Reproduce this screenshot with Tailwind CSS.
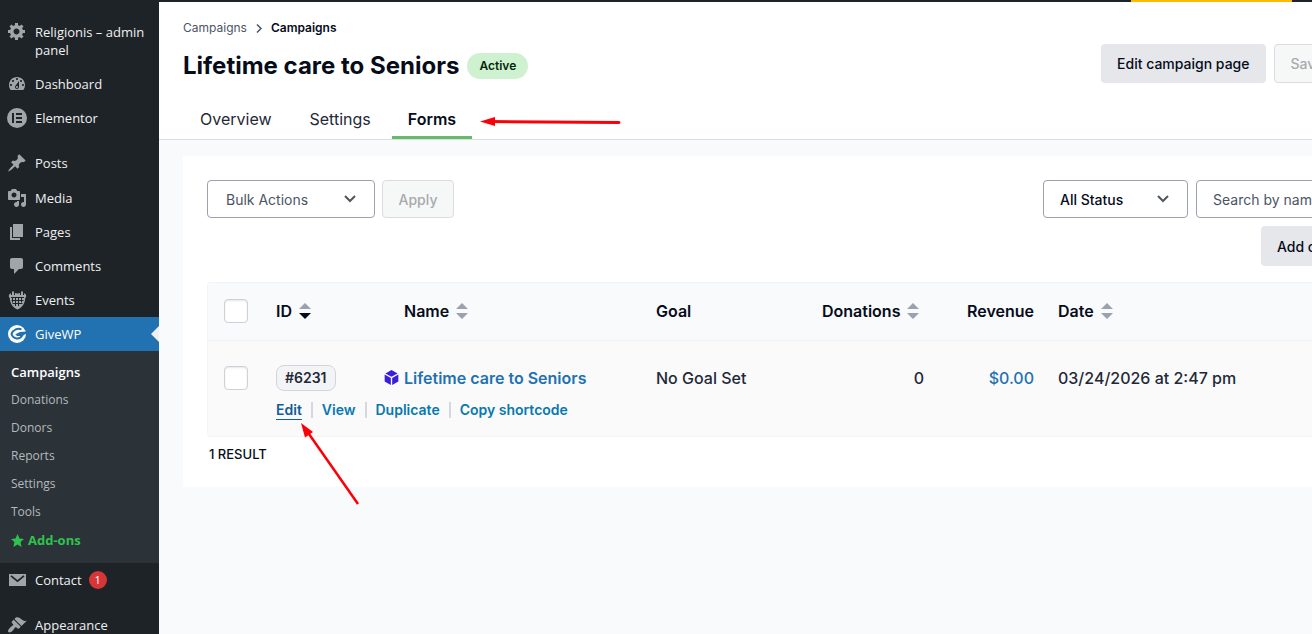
<!DOCTYPE html>
<html lang="en">
<head>
<meta charset="utf-8">
<title>Lifetime care to Seniors – Forms</title>
<meta name="viewport" content="width=device-width, initial-scale=1">
<script src="https://cdn.jsdelivr.net/npm/@tailwindcss/browser@4"></script>
</head>
<body class="flex h-screen overflow-hidden bg-[#f9fafc] font-[Inter,sans-serif] text-[#060c1a]">

<nav aria-label="Admin menu" class="w-[159px] shrink-0 overflow-hidden bg-[#1d2327] pt-[15px] font-['Open_Sans','Noto_Sans',sans-serif] text-[13px] leading-[18px] text-[#f0f0f1]">
  <a href="#" class="flex gap-2 py-2 pl-[7px]">
    <svg class="-mt-[2px] size-5 shrink-0 fill-[#a0a5aa]" viewBox="0 0 20 20"><path d="M18 12h-2.18c-.17.7-.44 1.35-.81 1.93l1.54 1.54-2.1 2.1-1.54-1.54c-.58.36-1.23.63-1.91.79V19H8v-2.18c-.68-.16-1.33-.43-1.91-.79l-1.54 1.54-2.12-2.12 1.54-1.54c-.36-.58-.63-1.23-.79-1.91H1V9.03h2.17c.16-.7.44-1.35.8-1.94L2.43 5.55l2.1-2.1 1.54 1.54c.58-.37 1.24-.64 1.93-.81V2h3v2.18c.68.16 1.33.43 1.91.79l1.54-1.54 2.12 2.12-1.54 1.54c.36.59.64 1.24.8 1.94H18V12zm-8.5 1.5c1.66 0 3-1.34 3-3s-1.34-3-3-3-3 1.34-3 3 1.34 3 3 3z"/></svg>
    <span>Religionis – admin<br>panel</span>
  </a>
  <a href="#" class="flex h-[34px] items-center gap-2 pl-[7px]">
    <svg class="size-5 shrink-0 fill-[#a0a5aa]" viewBox="0 0 20 20"><path d="M3.76 16h12.48c1.1-1.37 1.76-3.11 1.76-5 0-4.42-3.58-8-8-8s-8 3.58-8 8c0 1.89.66 3.63 1.76 5zM10 4c.55 0 1 .45 1 1s-.45 1-1 1-1-.45-1-1 .45-1 1-1zM6 6c.55 0 1 .45 1 1s-.45 1-1 1-1-.45-1-1 .45-1 1-1zm8 0c.55 0 1 .45 1 1s-.45 1-1 1-1-.45-1-1 .45-1 1-1zm-5.37 5.55L12 7v6c0 1.1-.9 2-2 2s-2-.9-2-2c0-.57.24-1.08.63-1.45zM4 10c.55 0 1 .45 1 1s-.45 1-1 1-1-.45-1-1 .45-1 1-1zm12 0c.55 0 1 .45 1 1s-.45 1-1 1-1-.45-1-1 .45-1 1-1zm-5 3c0-.55-.45-1-1-1s-1 .45-1 1 .45 1 1 1 1-.45 1-1z"/></svg>
    <span>Dashboard</span>
  </a>
  <a href="#" class="flex h-[34px] items-center gap-2 pl-[7px]">
    <svg class="size-5 shrink-0" viewBox="0 0 20 20"><circle cx="10" cy="10" r="10" fill="#a0a5aa"/><path fill="#1d2327" d="M5 5h2v10H5zM9 5h6v2H9zM9 9h6v2H9zM9 13h6v2H9z"/></svg>
    <span>Elementor</span>
  </a>
  <a href="#" class="mt-[11px] flex h-[34px] items-center gap-2 pl-[7px]">
    <svg class="size-5 shrink-0 fill-[#a0a5aa]" viewBox="0 0 20 20"><path d="M10.44 3.02l1.82-1.82 6.36 6.35-1.83 1.82c-1.05-.68-2.48-.57-3.41.36l-.75.75c-.92.93-1.04 2.35-.35 3.41l-1.83 1.82-2.41-2.41-2.8 2.79c-.42.42-3.38 2.71-3.8 2.29s1.86-3.39 2.28-3.81l2.79-2.79L4.1 9.36l1.83-1.82c1.05.69 2.48.57 3.4-.36l.75-.75c.93-.92 1.05-2.35.36-3.41z"/></svg>
    <span>Posts</span>
  </a>
  <a href="#" class="mt-px flex h-[34px] items-center gap-2 pl-[7px]">
    <svg class="size-5 shrink-0 fill-[#a0a5aa]" viewBox="0 0 20 20"><path d="M13 11V4c0-.55-.45-1-1-1h-1.67L9 1H5L3.67 3H2c-.55 0-1 .45-1 1v7c0 .55.45 1 1 1h10c.55 0 1-.45 1-1zM7 4.5c1.38 0 2.5 1.12 2.5 2.5S8.38 9.5 7 9.5 4.5 8.38 4.5 7 5.62 4.5 7 4.5zM14 6h5v10.5c0 1.38-1.12 2.5-2.5 2.5S14 17.88 14 16.5s1.12-2.5 2.5-2.5c.17 0 .34.02.5.05V9h-3V6zm-4 8.05V13h2v3.5c0 1.38-1.12 2.5-2.5 2.5S7 17.88 7 16.5 8.12 14 9.5 14c.17 0 .34.02.5.05z"/></svg>
    <span>Media</span>
  </a>
  <a href="#" class="flex h-[34px] items-center gap-2 pl-[7px]">
    <svg class="size-5 shrink-0 fill-[#a0a5aa]" viewBox="0 0 20 20"><path d="M6 15V2h10v13H6zm-1 1h8v2H3V5h2v11z"/></svg>
    <span>Pages</span>
  </a>
  <a href="#" class="flex h-[34px] items-center gap-2 pl-[7px]">
    <svg class="size-5 shrink-0 fill-[#a0a5aa]" viewBox="0 0 20 20"><path d="M5 2h9c1.1 0 2 .9 2 2v7c0 1.1-.9 2-2 2h-2l-5 5v-5H5c-1.1 0-2-.9-2-2V4c0-1.1.9-2 2-2z"/></svg>
    <span>Comments</span>
  </a>
  <a href="#" class="flex h-[34px] items-center gap-2 pl-[7px]">
    <svg class="size-5 shrink-0" viewBox="0 0 20 20"><path fill="#a0a5aa" d="M5 1.500h2V3c2 0 3 .2 3.500.8.5-.6 1.500-.8 3.500-.8V1.500h2V3c2.200.3 3.200 1.500 3.200 3.200 0 .8-.7 1.300-1 2C18 13.500 15 17.500 10.500 19.500 6 17.500 3 13.500 2.800 8.200c-.3-.7-1-1.200-1-2C1.800 4.500 2.800 3.300 5 3z"/><path fill="none" stroke="#1d2327" d="M4 7.500h13M5.500 7.500v5M8.500 7.500V16M11.500 7.500V16M14.500 7.500v5M4.500 10.500h12M5.500 13.500h10M4.500 3v2M7.500 3v2M13.500 3v2M16.500 3v2"/></svg>
    <span>Events</span>
  </a>
  <a href="#" aria-current="true" class="relative flex h-[34px] items-center gap-2 bg-[#2271b1] pl-[7px] text-white">
    <svg class="size-5 shrink-0" viewBox="0 0 20 20"><circle cx="10" cy="10" r="9" fill="#fff"/><path fill="none" stroke="#2271b1" stroke-width="2" d="M14.500 5.500C11 3.500 6 5.500 4.500 10c1.500 5 8 6.500 11 1H9.500"/><path fill="#2271b1" d="M8 10.500 13 8l6-.5v2.500l-5 2z"/></svg>
    <span>GiveWP</span>
    <svg class="absolute top-[9px] right-0 h-4 w-2 fill-[#f0f0f1]" viewBox="0 0 8 16"><path d="M8 0v16L0 8z"/></svg>
  </a>
  <div class="flex flex-col bg-[#2c3338] pt-[7px] pb-[9px] text-xs leading-[18px] text-[#b4b9be]">
    <a href="#" class="py-[5px] pl-[11px] text-[13px] leading-[18px] font-semibold text-white">Campaigns</a>
    <a href="#" class="py-[5px] pl-[11px]">Donations</a>
    <a href="#" class="py-[5px] pl-[11px]">Donors</a>
    <a href="#" class="py-[5px] pl-[11px]">Reports</a>
    <a href="#" class="py-[5px] pl-[11px]">Settings</a>
    <a href="#" class="py-[5px] pl-[11px]">Tools</a>
    <a href="#" class="flex items-center gap-1 py-[5px] pl-[11px] text-[13px] leading-[18px] font-bold text-[#2fc24f]">
      <svg class="size-[13px] fill-[#2fc24f]" viewBox="0 0 20 20"><path d="m10 0 3 6.800 7 .7-5.300 4.900L16.300 20 10 16l-6.300 4 1.600-7.600L0 7.500l7-.7z"/></svg>
      <span>Add-ons</span>
    </a>
  </div>
  <a href="#" class="flex h-[34px] items-center gap-2 pl-[7px]">
    <svg class="size-5 shrink-0" viewBox="0 0 20 20"><rect x="2" y="4" width="17" height="12" fill="#a0a5aa"/><path fill="none" stroke="#1d2327" stroke-width="1.700" d="m4 5.800 6.500 5.400L17 5.800"/></svg>
    <span>Contact</span>
    <span class="-ml-px flex size-[18px] items-center justify-center rounded-full bg-[#d63638] text-[11px] text-white">1</span>
  </a>
  <a href="#" class="mt-[11px] flex h-[34px] items-center gap-2 pl-[7px]">
    <svg class="size-5 shrink-0 fill-[#a0a5aa]" viewBox="0 0 20 20"><path d="M14.480 11.060L7.410 3.990l1.500-1.500c.5-.56 2.300-.47 3.510.32 1.210.8 1.430 1.280 2.910 2.100 1.180.64 2.450 1.260 4.450.85zm-.71.71L6.700 4.700 4.930 6.470c-.39.390-.39 1.020 0 1.410l1.060 1.060c.39.390.39 1.030 0 1.420-.6.600-1.430 1.110-2.210 1.690-.35.260-.7.530-1.010.84C1.430 14.230.4 16.080 1.400 17.070c.99 1 2.840-.03 4.180-1.360.31-.31.580-.66.850-1.020.57-.78 1.080-1.610 1.690-2.210.39-.39 1.020-.39 1.410 0l1.060 1.060c.39.390 1.020.39 1.410 0z"/></svg>
    <span>Appearance</span>
  </a>
</nav>

<div class="relative flex-1 overflow-hidden">
  <div class="flex h-[2px] justify-end bg-[#1d2327] pr-5"><span class="w-[161px] bg-[#ffba00]"></span></div>

  <div class="min-w-[1275px]">
    <header class="border-b border-[#dcdee3] bg-white px-6 pt-4">
      <nav aria-label="Breadcrumb" class="flex items-center gap-2 text-xs leading-5">
        <a href="#" class="text-[#4b5563]">Campaigns</a>
        <svg class="h-[9px] w-2 fill-none stroke-[#4b5563]" viewBox="0 0 8 9" stroke-width="1.500"><path d="m2 0.500 4 4-4 4"/></svg>
        <span class="font-semibold">Campaigns</span>
      </nav>
      <div class="mt-1 flex justify-between">
        <div class="mt-1 flex h-10 items-center gap-2">
          <h1 class="text-2xl font-bold">Lifetime care to Seniors</h1>
          <span class="rounded-full bg-[#cef2cf] px-3 py-1 text-xs leading-[18px] font-semibold text-[#06260d]">Active</span>
        </div>
        <div class="mt-[2px] flex h-[39px] gap-2 text-sm font-medium">
          <button type="button" class="rounded-[4px] bg-[#e5e7eb] px-4">Edit campaign page</button>
          <button type="button" disabled class="rounded-[4px] border border-[#dcdcde] bg-[#f6f7f7] px-4 text-[#a7aaad]">Save campaign</button>
        </div>
      </div>
      <div role="tablist" class="mt-[15px] flex text-base">
        <button role="tab" type="button" class="h-[38px] border-b-[3px] border-transparent px-[17px] text-[#1f2937]">Overview</button>
        <button role="tab" type="button" class="ml-1 h-[38px] border-b-[3px] border-transparent px-[17px] text-[#1f2937]">Settings</button>
        <button role="tab" type="button" aria-selected="true" class="ml-1 h-[38px] border-b-[3px] border-[#66bb6a] px-4 font-semibold">Forms</button>
      </div>
    </header>

    <main class="mx-6 mt-4 bg-white p-6 pb-[23px]">
      <div class="flex justify-between text-sm">
        <div class="flex h-[38px] gap-[7px]">
          <div class="relative">
            <select aria-label="Bulk actions" class="h-full w-[168px] appearance-none rounded-[4px] border border-[#9ca0af] bg-white pt-[2px] pl-[18px] text-[#4b5563]"><option>Bulk Actions</option></select>
            <svg class="pointer-events-none absolute top-[15px] right-[19px] h-2 w-3 fill-none stroke-[#50575e]" stroke-width="2" viewBox="0 0 12 8"><path d="m1 1 5 5 5-5"/></svg>
          </div>
          <button type="button" disabled class="w-[72px] rounded-[4px] border border-[#dcdcde] bg-[#f6f7f7] pt-[2px] font-medium text-[#a7aaad]">Apply</button>
        </div>
        <div class="flex flex-col items-end gap-2">
          <div class="flex h-[38px] gap-2">
            <div class="relative">
              <select aria-label="Status" class="h-full w-[145px] appearance-none rounded-[4px] border border-[#9ca0af] bg-white pt-[2px] pl-4 font-medium"><option>All Status</option></select>
              <svg class="pointer-events-none absolute top-[15px] right-[19px] h-2 w-3 fill-none stroke-[#50575e]" stroke-width="2" viewBox="0 0 12 8"><path d="m1 1 5 5 5-5"/></svg>
            </div>
            <input type="search" aria-label="Search forms" placeholder="Search by name or ID" class="w-[190px] rounded-[4px] border border-[#9ca0af] bg-white px-4 pt-[2px] placeholder:text-[#4b5563]">
          </div>
          <button type="button" class="h-10 w-[125px] rounded-[4px] bg-[#e5e7eb] px-4 pt-[2px] font-medium whitespace-nowrap">Add campaign</button>
        </div>
      </div>

      <div class="mt-4 overflow-hidden rounded-[4px] border border-[#f3f4f6]">
        <table class="w-full table-fixed text-left text-base">
          <colgroup><col class="w-[56px]"><col class="w-[128px]"><col class="w-[252px]"><col class="w-[166px]"><col class="w-[126px]"><col class="w-[110px]"><col></colgroup>
          <thead class="bg-[#f9fafc]">
            <tr class="h-[57px] border-b border-[#f1f2f4] [&>th]:px-3 [&>th]:font-semibold">
              <th class="!px-4"><input type="checkbox" aria-label="Select all" class="block size-6 appearance-none rounded-[4px] border border-[#cfd1da] bg-white shadow-[inset_0_1px_2px_rgba(0,0,0,0.1)]"></th>
              <th><button type="button" class="flex items-center gap-[7px]">ID
                <svg class="h-4 w-3" viewBox="0 0 12 16"><path fill="#9ca0af" d="M6 0l6 6H0z"/><path fill="#060c1a" d="M0 10h12l-6 6z"/></svg></button></th>
              <th><button type="button" class="flex items-center gap-[7px]">Name
                <svg class="h-4 w-3" viewBox="0 0 12 16"><path fill="#9ca0af" d="M6 0l6 6H0zM0 10h12l-6 6z"/></svg></button></th>
              <th>Goal</th>
              <th><button type="button" class="ml-auto flex items-center gap-[7px] pr-[5px]">Donations
                <svg class="h-4 w-3 shrink-0" viewBox="0 0 12 16"><path fill="#9ca0af" d="M6 0l6 6H0zM0 10h12l-6 6z"/></svg></button></th>
              <th class="text-right">Revenue</th>
              <th><button type="button" class="flex items-center gap-[7px]">Date
                <svg class="h-4 w-3" viewBox="0 0 12 16"><path fill="#9ca0af" d="M6 0l6 6H0zM0 10h12l-6 6z"/></svg></button></th>
            </tr>
          </thead>
          <tbody class="bg-[#fafafa]">
            <tr class="h-24 align-top font-medium text-[#1f2937] [&>td]:px-3 [&>td]:pt-[25px]">
              <td class="!px-4"><input type="checkbox" aria-label="Select form 6231" class="block size-6 appearance-none rounded-[4px] border border-[#cfd1da] bg-white shadow-[inset_0_1px_2px_rgba(0,0,0,0.1)]"></td>
              <td class="!pt-6">
                <span class="flex h-[26px] w-fit items-center rounded-lg border border-[#d1d5db] bg-[#f3f4f6] px-2 text-sm font-semibold">#6231</span>
                <div class="mt-[9px] flex items-center text-sm leading-5 font-semibold whitespace-nowrap text-[#0878b0]">
                  <a href="#" class="text-[#135e96] underline underline-offset-4">Edit</a>
                  <span class="mx-[9px] h-4 w-[2px] shrink-0 bg-[#d6d8e0]"></span>
                  <a href="#">View</a>
                  <span class="mx-[9px] h-4 w-[2px] shrink-0 bg-[#d6d8e0]"></span>
                  <a href="#">Duplicate</a>
                  <span class="mx-[9px] h-4 w-[2px] shrink-0 bg-[#d6d8e0]"></span>
                  <a href="#">Copy shortcode</a>
                </div>
              </td>
              <td><a href="#" class="-ml-5 flex items-center gap-[5px] font-semibold text-[#2271b1]">
                <svg class="size-[15px] shrink-0 fill-[#3b1ed8]" viewBox="0 0 16 16"><path d="M8 0l6.500 3.600L8 7.200 1.500 3.600zM.7 4.800l6.600 3.700V16L.7 12.300zM15.300 4.800v7.500L8.700 16V8.500z"/></svg>Lifetime care to Seniors</a></td>
              <td>No Goal Set</td>
              <td class="text-right">0</td>
              <td class="text-right"><a href="#" class="text-[#2271b1]">$0.00</a></td>
              <td>03/24/2026 at 2:47 pm</td>
            </tr>
          </tbody>
        </table>
      </div>
      <p class="mt-[7px] pl-[2px] text-[13px] leading-5 font-medium">1 RESULT</p>
    </main>
  </div>

  <!-- Red pointer arrows -->
  <svg class="pointer-events-none absolute top-0 left-0 h-[634px] w-[600px] fill-[#fb0007] stroke-[#fb0007]" viewBox="0 0 600 634">
    <path d="M332 121.500 460 122.500" stroke-width="3" stroke-linecap="round"/><path stroke="none" d="m321 121.500 15-4.500v9z"/>
    <path d="M150 434 199 504" stroke-width="2.500"/><path stroke="none" d="m142 423 12 9-8 5.500z"/>
  </svg>
</div>
</body>
</html>
